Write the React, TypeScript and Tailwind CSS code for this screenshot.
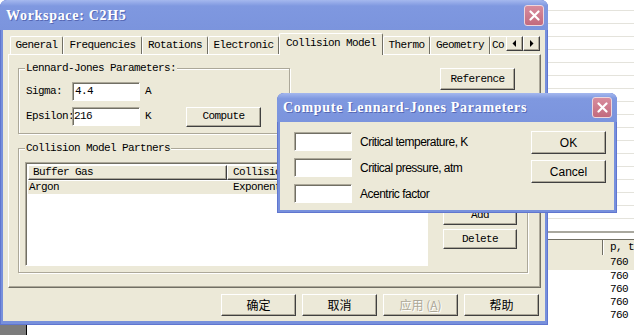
import React from 'react';

const MONO = "font-['Liberation_Mono',monospace] text-[11px] tracking-[-0.6px] text-black";
const SANS = "font-['Liberation_Sans',Arial,sans-serif] text-[12px] tracking-[-0.5px] text-black";
const CJK = "font-['Noto_Sans_CJK_SC','Noto_Sans_CJK_JP',sans-serif] text-[12px]";
const TITLE = "font-['Liberation_Serif',serif] font-bold text-[14px] tracking-[0.7px] text-white [text-shadow:1px_1px_0_#5668b4]";

const raised =
  'bg-[#ece9d8] border border-t-white border-l-white border-r-[#404040] border-b-[#404040] shadow-[inset_-1px_-1px_0_#aca899]';
const sunken =
  'bg-white border border-t-[#aca899] border-l-[#aca899] border-r-white border-b-white shadow-[inset_1px_1px_0_#716f64]';

const tabs = [
  { label: 'General', w: 'w-[53px]' },
  { label: 'Frequencies', w: 'w-[79px]' },
  { label: 'Rotations', w: 'w-[66px]' },
  { label: 'Electronic', w: 'w-[71px]' },
  { label: 'Collision Model', w: 'w-[104px]', selected: true },
  { label: 'Thermo', w: 'w-[47px]' },
  { label: 'Geometry', w: 'w-[60px]' },
];

function Btn({ children, className = '' }: { children: React.ReactNode; className?: string }) {
  return <div className={`flex items-center justify-center ${raised} ${className}`}>{children}</div>;
}

function CloseBox({ className = '' }: { className?: string }) {
  return (
    <div
      className={`flex items-center justify-center rounded-[3px] border border-[#eed6dc] bg-linear-to-b from-[#d88c9d] to-[#c26a7e] ${className}`}
    >
      <svg width="11" height="11" viewBox="0 0 11 11">
        <path d="M1.5 1.5 L9.5 9.5 M9.5 1.5 L1.5 9.5" stroke="#fff" strokeWidth="2.2" strokeLinecap="round" />
      </svg>
    </div>
  );
}

function GroupBox({ label, className = '', children }: { label: string; className?: string; children?: React.ReactNode }) {
  return (
    <div className={`relative border border-[#aca899] shadow-[1px_1px_0_#fff,inset_1px_1px_0_#fff] ${className}`}>
      <span className={`absolute -top-[8px] left-[6px] bg-[#ece9d8] px-px leading-[14px] ${MONO}`}>{label}</span>
      {children}
    </div>
  );
}

function Arrow({ dir }: { dir: 'left' | 'right' }) {
  return (
    <div className={`w-[17px] h-[15px] ${raised} flex items-center justify-center`}>
      <svg width="5" height="7" viewBox="0 0 5 7">
        {dir === 'left' ? <path d="M4 0 L4 7 L0.5 3.5 Z" fill="#000" /> : <path d="M1 0 L1 7 L4.5 3.5 Z" fill="#000" />}
      </svg>
    </div>
  );
}

function MainWindow() {
  return (
    <div className="absolute left-0 top-0 w-[548px] h-[325px] flex flex-col rounded-t-[7px] bg-[#7790dc] shadow-[inset_0_0_0_1px_#6076cf]">
      <div className="h-[30px] shrink-0 flex items-center justify-between pl-[6px] pr-[4px] rounded-t-[7px] bg-linear-to-b from-[#a5b8ee] via-[#7f98e0] via-20% to-[#7b94dd]">
        <span className={TITLE}>Workspace: C2H5</span>
        <CloseBox className="w-[20px] h-[21px]" />
      </div>

      <div className="flex-1 mx-[3px] mb-[4px] bg-[#ece9d8] px-[5px] pt-[3px] flex flex-col">
        {/* tab strip */}
        <div className="relative h-[21px] flex items-end pl-[2px] shrink-0">
          {tabs.map((t) =>
            t.selected ? (
              <div
                key={t.label}
                className={`${t.w} shrink-0 h-[22px] -mb-px relative z-10 bg-[#ece9d8] border-t border-l border-r border-t-white border-l-white border-r-[#716f64] rounded-t-[2px] flex items-center justify-center pb-[3px] ${MONO}`}
              >
                {t.label}
              </div>
            ) : (
              <div
                key={t.label}
                className={`${t.w} shrink-0 h-[18px] border-t border-l border-r border-t-white border-l-white border-r-[#716f64] rounded-t-[2px] flex items-center justify-center whitespace-nowrap ${MONO}`}
              >
                {t.label}
              </div>
            )
          )}
          <div className={`w-[18px] shrink-0 h-[18px] border-t border-l border-t-white border-l-white rounded-tl-[2px] flex items-center pl-[1px] ${MONO}`}>
            Co
          </div>
          <div className="flex self-start mt-[3px] ml-[-2px] z-20">
            <Arrow dir="left" />
            <Arrow dir="right" />
          </div>
        </div>

        {/* tab panel */}
        <div className="h-[234px] w-[533px] shrink-0 border border-t-white border-l-white border-r-[#716f64] border-b-[#716f64] shadow-[inset_-1px_-1px_0_#aca899] pl-[9px] pt-[13px]">
          <div className="flex items-start">
            <GroupBox label="Lennard-Jones Parameters:" className="w-[272px] h-[66px] shrink-0">
              <div className="pl-[7px] pt-[13px]">
                <div className="flex items-center h-[19px]">
                  <span className={`w-[46px] whitespace-nowrap ${MONO}`}>Sigma:</span>
                  <div className={`w-[68px] h-[19px] flex items-center pl-[2px] ${sunken} ${MONO}`}>4.4</div>
                  <span className={`ml-[5px] ${MONO}`}>A</span>
                </div>
                <div className="flex items-center h-[19px] mt-[6px]">
                  <span className={`w-[46px] whitespace-nowrap ${MONO}`}>Epsilon:</span>
                  <div className={`w-[68px] h-[19px] flex items-center pl-px relative ${sunken} ${MONO}`}>216</div>
                  <span className={`ml-[5px] ${MONO}`}>K</span>
                  <Btn className={`ml-[35px] w-[75px] h-[20px] ${MONO}`}>Compute</Btn>
                </div>
              </div>
            </GroupBox>
            <Btn className={`ml-[150px] w-[75px] h-[22px] ${MONO}`}>Reference</Btn>
          </div>

          <GroupBox label="Collision Model Partners" className="mt-[14px] w-[510px] h-[125px]">
            <div className="flex pl-[6px] pt-[13px]">
              <div className={`w-[403px] h-[104px] ${sunken} p-[2px] overflow-hidden`}>
                <div className="flex h-[15px]">
                  <div className={`w-[199px] shrink-0 flex items-center pl-[4px] ${raised} ${MONO}`}>Buffer Gas</div>
                  <div className={`flex-1 flex items-center pl-[5px] whitespace-nowrap ${raised} ${MONO}`}>Collision Model</div>
                </div>
                <div className="mt-px h-[13px] flex items-center bg-[#ece9d8]">
                  <span className={`w-[205px] pl-[1px] ${MONO}`}>Argon</span>
                  <span className={MONO}>Exponential</span>
                </div>
              </div>
              <div className="ml-[15px] self-end mb-[17px] flex flex-col gap-[4px]">
                <Btn className={`w-[74px] h-[20px] ${MONO}`}>Add</Btn>
                <Btn className={`w-[74px] h-[20px] ${MONO}`}>Delete</Btn>
              </div>
            </div>
          </GroupBox>
        </div>

        {/* bottom buttons */}
        <div className="mt-[6px] flex justify-end gap-[6px] pr-px">
          <Btn className={`w-[75px] h-[22px] ${CJK} text-black`}>确定</Btn>
          <Btn className={`w-[75px] h-[22px] ${CJK} text-black`}>取消</Btn>
          <Btn className={`w-[75px] h-[22px] ${CJK} text-[#aca899] [text-shadow:1px_1px_0_#fff]`}>
            应用 (<span className="underline">A</span>)
          </Btn>
          <Btn className={`w-[75px] h-[22px] ${CJK} text-black`}>帮助</Btn>
        </div>
      </div>
    </div>
  );
}

function ComputeDialog() {
  const fields = ['Critical temperature, K', 'Critical pressure, atm', 'Acentric factor'];
  return (
    <div className="absolute left-[277px] top-[93px] w-[340px] h-[120px] flex flex-col rounded-t-[7px] bg-[#7790dc] shadow-[inset_0_0_0_1px_#6076cf]">
      <div className="h-[29px] shrink-0 flex items-center justify-between pl-[6px] pr-[5px] rounded-t-[7px] bg-linear-to-b from-[#a5b8ee] via-[#7f98e0] via-20% to-[#7b94dd]">
        <span className={TITLE}>Compute Lennard-Jones Parameters</span>
        <CloseBox className="w-[20px] h-[21px]" />
      </div>
      <div className="flex-1 mx-[3px] mb-[3px] bg-[#ece9d8] flex">
        <div className="pl-[14px] pt-[10px] flex flex-col gap-[7px]">
          {fields.map((f) => (
            <div key={f} className="flex items-center">
              <div className={`w-[58px] h-[19px] ${sunken}`} />
              <span className={`ml-[8px] ${SANS}`}>{f}</span>
            </div>
          ))}
        </div>
        <div className="ml-auto pr-[8px] pt-[9px] flex flex-col gap-[6px]">
          <Btn className={`w-[75px] h-[23px] ${SANS} tracking-normal`}>OK</Btn>
          <Btn className={`w-[75px] h-[23px] ${SANS} tracking-normal`}>Cancel</Btn>
        </div>
      </div>
    </div>
  );
}

function BackgroundApp() {
  const rows = Array.from({ length: 17 });
  const values = ['760', '760', '760', '760', '760'];
  return (
    <>
      <div className="absolute left-[548px] top-0 right-0 h-[231px] pt-[10px] flex flex-col">
        {rows.map((_, i) => (
          <div key={i} className="h-[13px] shrink-0 border-t border-[#e4e3dc]" />
        ))}
      </div>
      <div className="absolute left-[548px] top-[231px] right-0 bottom-0 flex flex-col">
        <div className="h-[2px] bg-[#a9a89f]" />
        <div className="h-[6px] bg-white" />
        <div className="h-[16px] flex border-t border-[#716f64] bg-[#ece9d8]">
          <div className="w-[55px] border-r border-[#716f64]" />
          <div className={`flex-1 flex items-center pl-[6px] border-l border-white whitespace-nowrap ${MONO}`}>p, t</div>
        </div>
        {values.map((v, i) => (
          <div
            key={i}
            className={`${i === 0 ? 'h-[15px] bg-[#ece9d8]' : 'h-[13px]'} flex items-center pl-[62px] ${MONO}`}
          >
            {v}
          </div>
        ))}
      </div>
      <div className="absolute left-0 top-[325px] w-[26px] h-[10px] bg-[#7c7c7c]" />
      <div className="absolute left-[26px] top-[325px] w-px h-[10px] bg-black" />
    </>
  );
}

export default function App() {
  return (
    <div className="relative w-[634px] h-[335px] overflow-hidden bg-white">
      <BackgroundApp />
      <MainWindow />
      <ComputeDialog />
    </div>
  );
}
